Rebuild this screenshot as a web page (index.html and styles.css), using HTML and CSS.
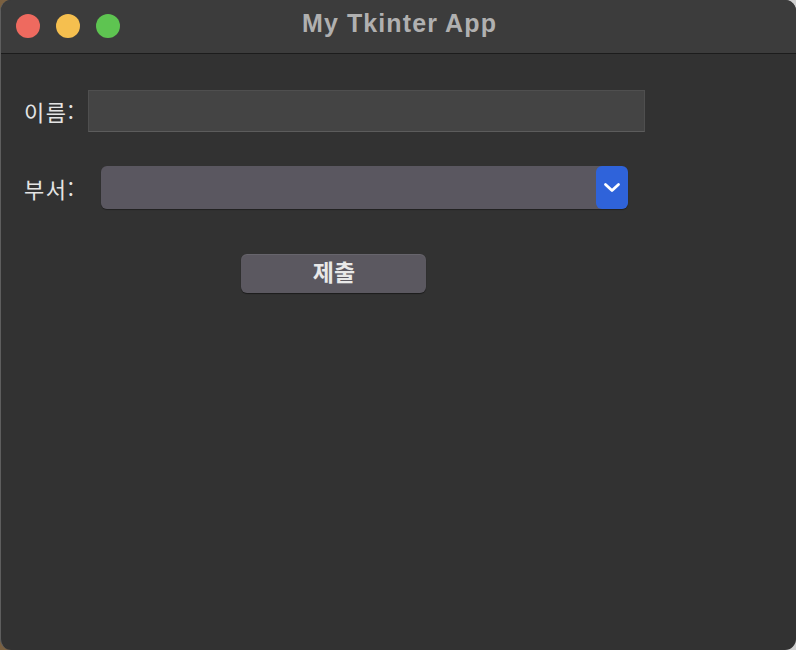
FILE: index.html
```html
<!DOCTYPE html>
<html lang="ko">
<head>
<meta charset="utf-8">
<title>My Tkinter App</title>
<link rel="stylesheet" href="styles.css">
</head>
<body>
<div class="window">
  <div class="titlebar">
    <div class="lights">
      <span class="light red"></span>
      <span class="light yellow"></span>
      <span class="light green"></span>
    </div>
    <div class="title">My Tkinter App</div>
  </div>
  <div class="content">
    <div class="row row-name">
      <label class="label">이름:</label>
      <div class="entry"></div>
    </div>
    <div class="row row-dept">
      <label class="label">부서:</label>
      <div class="combo">
        <div class="combo-field"></div>
        <div class="combo-btn">
          <svg width="18" height="11" viewBox="0 0 18 11"><path d="M2.5 2.5 L9 8.5 L15.5 2.5" fill="none" stroke="#fff" stroke-width="2.8" stroke-linecap="round" stroke-linejoin="round"/></svg>
        </div>
      </div>
    </div>
    <div class="row row-submit">
      <button class="submit">제출</button>
    </div>
  </div>
</div>
</body>
</html>
```

FILE: styles.css
```css
* { box-sizing: border-box; }
html, body {
  margin: 0;
  padding: 0;
  width: 796px;
  height: 650px;
  overflow: hidden;
  background: linear-gradient(90deg, #7a6040 0%, #9a9a9a 50%, #d0d0d0 100%);
}
.window {
  width: 796px;
  height: 650px;
  border-radius: 11px;
  background: #323232;
  border-left: 1px solid #5e5e5e;
  overflow: hidden;
  display: flex;
  flex-direction: column;
  font-family: "Noto Sans CJK KR", "Noto Sans", sans-serif;
}
.titlebar {
  height: 54px;
  flex: none;
  background: #3c3c3c;
  border-bottom: 1px solid #1c1c1c;
  display: flex;
  align-items: center;
  position: relative;
}
.lights {
  display: flex;
  gap: 16px;
  padding-left: 15px;
  margin-top: -1px;
}
.light {
  width: 24px;
  height: 24px;
  border-radius: 50%;
  display: block;
}
.red { background: #ee6a5f; }
.yellow { background: #f5bf4f; }
.green { background: #5ec451; }
.title {
  position: absolute;
  left: 0;
  right: 0;
  top: 9px;
  text-align: center;
  font-family: "Liberation Sans", Arial, sans-serif;
  font-weight: bold;
  font-size: 25px;
  letter-spacing: 1.1px;
  color: #b0b0b0;
  padding-left: 2px;
}
.content {
  padding: 36px 0 0 23px;
  display: flex;
  flex-direction: column;
}
.row {
  display: flex;
  align-items: center;
}
.label {
  font-size: 22px;
  letter-spacing: 1.6px;
  color: #e4e4e4;
  line-height: 26px;
}
.row-name .label { width: 64px; }
.entry {
  width: 557px;
  height: 42px;
  background: #444444;
  border: 1px solid #4f4f4f;
  border-bottom-color: #5c5c5c;
}
.row-dept {
  margin-top: 34px;
}
.row-dept .label { width: 77px; }
.combo {
  width: 527px;
  height: 43px;
  display: flex;
  border-radius: 6px;
  box-shadow: 0 1px 1px rgba(0,0,0,0.35);
}
.combo-field {
  flex: 1;
  background: #5a5760;
  border-radius: 6px 0 0 6px;
}
.combo-btn {
  width: 32px;
  background: #2f63da;
  border-radius: 6px;
  display: flex;
  align-items: center;
  justify-content: center;
  margin-left: -6px;
}
.row-submit {
  margin-top: 45px;
  padding-left: 217px;
}
.submit {
  width: 185px;
  height: 39px;
  background: #5b5860;
  border: none;
  border-radius: 6px;
  box-shadow: 0 1px 1px rgba(0,0,0,0.45), inset 0 1px 0 rgba(255,255,255,0.08);
  color: #e8e8e8;
  font-family: "Noto Sans CJK KR", sans-serif;
  font-weight: bold;
  font-size: 23px;
  padding: 0 0 5px 1px;
  line-height: 1;
}
```
